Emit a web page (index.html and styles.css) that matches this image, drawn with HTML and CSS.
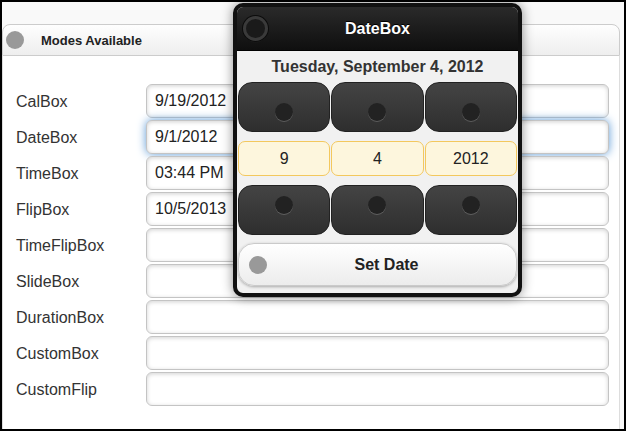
FILE: index.html
```html
<!DOCTYPE html>
<html>
<head>
    <title>DateBox Modes</title>
    <link rel="stylesheet" href="styles.css">
</head>
<body>
    <div class="frame">
        <div class="collapsible">
            <h3 class="coll-head"><span class="dot"></span>Modes Available</h3>
            <div class="coll-body">
                <div class="field"><label>CalBox</label><input type="text" value="9/19/2012"></div>
                <div class="field"><label>DateBox</label><input type="text" class="focus" value="9/1/2012"></div>
                <div class="field"><label>TimeBox</label><input type="text" value="03:44 PM"></div>
                <div class="field"><label>FlipBox</label><input type="text" value="10/5/2013"></div>
                <div class="field"><label>TimeFlipBox</label><input type="text" value=""></div>
                <div class="field"><label>SlideBox</label><input type="text" value=""></div>
                <div class="field"><label>DurationBox</label><input type="text" value=""></div>
                <div class="field"><label>CustomBox</label><input type="text" value=""></div>
                <div class="field"><label>CustomFlip</label><input type="text" value=""></div>
            </div>
        </div>

        <!-- popup picker -->
        <div class="datebox">
            <div class="db-head">
                <span class="close"></span>
                <h2>DateBox</h2>
                <span></span>
            </div>
            <div class="db-body">
                <div class="db-title">Tuesday, September 4, 2012</div>
                <div class="db-row">
                    <div class="spin up"><span class="knob"></span></div>
                    <div class="spin up"><span class="knob"></span></div>
                    <div class="spin up"><span class="knob"></span></div>
                </div>
                <div class="db-row vals">
                    <div class="val">9</div>
                    <div class="val">4</div>
                    <div class="val">2012</div>
                </div>
                <div class="db-row">
                    <div class="spin down"><span class="knob"></span></div>
                    <div class="spin down"><span class="knob"></span></div>
                    <div class="spin down"><span class="knob"></span></div>
                </div>
                <div class="set-btn"><span class="set-dot"></span><span class="set-text">Set Date</span></div>
            </div>
        </div>
    </div>
</body>
</html>
```

FILE: styles.css
```css
body {
    margin: 0;
    font-family: "Liberation Sans", Arial, sans-serif;
}
.frame {
    position: relative;
    width: 626px;
    height: 431px;
    box-sizing: border-box;
    border: 2px solid #000;
    background: #f9f9f9;
    overflow: hidden;
}
.collapsible {
    margin: 22px 4px 0 0;
}
.coll-head {
    display: flex;
    align-items: center;
    height: 30px;
    margin: 0;
    padding-left: 3px;
    border: 1px solid #ccc;
    border-radius: 8px 8px 0 0;
    background: linear-gradient(#fefefe, #eeeeee);
    font-size: 13px;
    font-weight: bold;
    color: #222;
}
.dot {
    width: 18px;
    height: 18px;
    margin-right: 17px;
    border-radius: 50%;
    background: #999;
}
.coll-body {
    background: #fff;
    border: 1px solid #ddd;
    border-top: none;
    padding: 28px 10px 40px 13px;
}
.field {
    display: flex;
    align-items: center;
    height: 34px;
    margin-bottom: 2px;
}
.field label {
    width: 130px;
    padding-top: 2px;
    font-size: 16px;
    color: #333;
}
.field input {
    flex: 1;
    height: 34px;
    box-sizing: border-box;
    padding: 0 8px;
    border: 1px solid #c4c4c4;
    border-radius: 6px;
    box-shadow: inset 0 1px 4px rgba(0, 0, 0, 0.18);
    font-family: "Liberation Sans", Arial, sans-serif;
    font-size: 16px;
    color: #222;
    outline: none;
}
.field input.focus {
    box-shadow: inset 0 1px 4px rgba(0, 0, 0, 0.18), 0 0 10px #5f9bd6;
}

/* popup */
.datebox {
    position: absolute;
    left: 231px;
    top: 1px;
    width: 289px;
    box-sizing: border-box;
    border: 4px solid #111;
    border-radius: 10px;
    background: #f1f1f1;
    box-shadow: 0 0 12px rgba(0, 0, 0, 0.45);
    overflow: hidden;
}
.db-head {
    display: grid;
    grid-template-columns: 25px 1fr 25px;
    align-items: center;
    height: 44px;
    padding: 0 6px;
    background: linear-gradient(#2a2a2a, #0f0f0f);
    border-bottom: 1px solid #000;
    box-sizing: border-box;
}
.db-head h2 {
    margin: 0;
    text-align: center;
    font-size: 16px;
    color: #fff;
    text-shadow: 0 -1px 0 #000;
}
.close {
    width: 25px;
    height: 25px;
    box-sizing: border-box;
    border-radius: 50%;
    border: 3px solid #3a3a3a;
    background: #1a1a1a;
    box-shadow: 0 0 0 1px #0c0c0c, 0 1px 1px rgba(255, 255, 255, 0.15);
}
.db-body {
    padding: 0 1px 7px;
}
.db-title {
    height: 31px;
    line-height: 31px;
    text-align: center;
    font-size: 16px;
    font-weight: bold;
    color: #333;
}
.db-row {
    display: grid;
    grid-template-columns: 1fr 1fr 1fr;
    gap: 1px;
    margin-bottom: 9px;
}
.spin {
    display: flex;
    justify-content: center;
    height: 50px;
    box-sizing: border-box;
    border: 1px solid #222;
    border-radius: 14px;
    background: linear-gradient(#444, #2e2e2e);
}
.spin.up {
    align-items: flex-end;
    padding-bottom: 10px;
}
.spin.down {
    align-items: flex-start;
    padding-top: 10px;
}
.knob {
    width: 18px;
    height: 18px;
    border-radius: 50%;
    background: #222;
    box-shadow: 0 1px 0 rgba(255, 255, 255, 0.2);
}
.vals .val {
    height: 35px;
    line-height: 33px;
    box-sizing: border-box;
    border: 1px solid #f3c85e;
    border-radius: 7px;
    background: #fdf6dd;
    text-align: center;
    font-size: 16px;
    color: #222;
}
.set-btn {
    display: flex;
    align-items: center;
    height: 43px;
    margin-top: -1px;
    padding: 0 10px;
    box-sizing: border-box;
    border: 1px solid #cacaca;
    border-radius: 16px;
    background: linear-gradient(#ffffff, #ececec);
    box-shadow: 0 1px 3px rgba(0, 0, 0, 0.3);
}
.set-dot {
    width: 18px;
    height: 18px;
    border-radius: 50%;
    background: #999;
}
.set-text {
    flex: 1;
    text-align: center;
    font-size: 16px;
    font-weight: bold;
    color: #222;
}
```
